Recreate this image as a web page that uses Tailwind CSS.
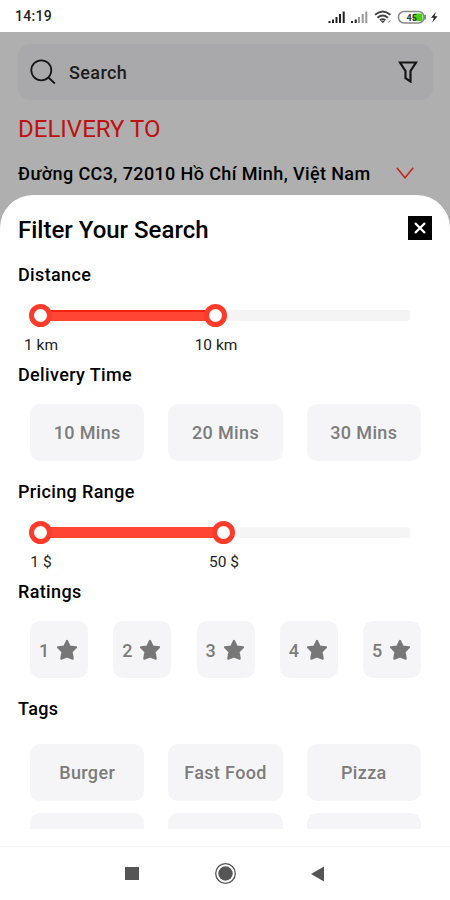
<!DOCTYPE html>
<html lang="vi">
<head>
    <meta charset="UTF-8">
    <meta name="viewport" content="width=device-width, initial-scale=1.0">
    <title>Filter Your Search</title>
    <script src="https://cdn.jsdelivr.net/npm/@tailwindcss/browser@4"></script>
</head>
<body class="bg-white font-['Roboto','Noto_Sans',sans-serif] text-black">
<div class="w-[450px] h-[900px] flex flex-col overflow-hidden">

    <!-- Status bar -->
    <div class="h-8 shrink-0 flex items-center justify-between pt-px pl-[15px] pr-3">
        <span class="text-[14px] font-medium tracking-[0.3px] text-[#222]">14:19</span>
        <svg class="w-[112px] h-4" viewBox="326 8 112 16" fill="none">
            <g fill="#222">
                <path d="M328.5 20h2v2h-2zM332 18.5h2v3.5h-2zM335.5 16h2v6h-2zM339 13h2v9h-2zM342.7 10.5h2v11.5h-2z"/>
                <path d="M351 20h2v2h-2zM354.7 18.5h2v3.5h-2z"/>
            </g>
            <path fill="#999" d="M358 16h2v6h-2zM361.7 13h2v9h-2zM365.3 10.5h2v11.5h-2z"/>
            <g stroke="#444" stroke-width="1.9">
                <path d="M375 13.8q7.7-6.5 15.4 0"/>
                <path d="M377.5 16.7q5.2-4.3 10.4 0"/>
                <path d="M380 19.3q2.7-2.2 5.4 0"/>
            </g>
            <path fill="#444" d="M380.8 20l2 2.3 2-2.3z"/>
            <path stroke="#888" d="M388 21.5l2.5-2"/>
            <rect x="398.500" y="10.500" width="25.500" height="11.500" rx="5.500" stroke="#888" stroke-width="1.500"/>
            <path fill="#888" d="M424 14h2v4.500h-2z"/>
            <rect x="413" y="12.500" width="9.500" height="7.500" rx="1.500" fill="#48d018"/>
            <text x="406.500" y="19.500" font-size="9" font-weight="700" fill="#333">45</text>
            <path fill="#222" d="M436 10.800l-5 6h3l-2 5 5.500-6.500h-3z"/>
        </svg>
    </div>

    <!-- Page behind the sheet -->
    <div class="grow min-h-0 flex flex-col bg-[#afafaf]">
        <div class="px-[18px] pt-3">
            <div class="h-14 -mr-px flex items-center rounded-xl bg-[#a9a9ab] pl-3 pr-[15px]">
                <svg class="w-[26px] h-[26px]" viewBox="0 0 26 26" fill="none" stroke="#161616" stroke-width="1.8">
                    <circle cx="11.3" cy="11.3" r="10"/>
                    <path d="M18.500 18.500l6.300 6"/>
                </svg>
                <span class="ml-[13px] mt-px grow text-[18px] font-medium tracking-[0.4px] text-[#1c1c1c]">Search</span>
                <svg class="w-5 h-[22px]" viewBox="0 0 20 22" fill="none" stroke="#161616" stroke-width="2.2">
                    <path d="M2 1.500h16l-5.500 8.500v10.500l-5-3.300v-7.200z"/>
                </svg>
            </div>
            <div class="mt-[15px] text-[24px] leading-7 text-[#c01010]">DELIVERY TO</div>
            <div class="mt-4 h-7 flex items-center">
                <span class="w-[378px] whitespace-nowrap text-[18px] font-medium tracking-[0.39px]">Đường CC3, 72010 Hồ Chí Minh, Việt Nam</span>
                <svg class="w-[18px] h-3" viewBox="0 0 18 12" fill="none" stroke="#c8201a" stroke-width="1.5">
                    <path d="M.8.8l8.200 10 8.200-10"/>
                </svg>
            </div>
        </div>

        <!-- Filter sheet -->
        <div class="mt-2 grow min-h-0 overflow-hidden rounded-t-[33px] bg-white px-[18px] pt-5">
            <div class="h-7 flex items-center justify-between">
                <h1 class="pt-px text-[24px] leading-7 font-medium">Filter Your Search</h1>
                <div class="w-6 h-6 -mt-0.5 bg-black flex items-center justify-center">
                    <svg class="w-3 h-3" viewBox="0 0 12 12" stroke="#fff" stroke-width="2.3"><path d="M1 1l10 10M11 1L1 11"/></svg>
                </div>
            </div>

            <h2 class="mt-5 text-[18px] leading-6 font-medium tracking-[0.36px]">Distance</h2>
            <div class="relative mt-[17px] ml-[11px] h-[23px] w-[381px] flex items-center">
                <div class="ml-3 h-[11px] w-[175px] border-t-2 border-[#f02214] bg-[#ff4635]"></div>
                <div class="h-[11px] grow rounded-r-sm bg-[#f4f4f4]"></div>
                <div class="absolute left-0 w-[23px] h-[23px] rounded-full border-[5.5px] border-[#fc3b2b] bg-white"></div>
                <div class="absolute left-[175px] w-[23px] h-[23px] rounded-full border-[5.5px] border-[#fc3b2b] bg-white"></div>
            </div>
            <div class="mt-[9px] flex text-[15.5px] leading-[18px] text-[#222]">
                <span class="w-[46px] text-center">1 km</span>
                <span class="ml-[124px] w-[56px] text-center">10 km</span>
            </div>

            <h2 class="mt-[9px] text-[18px] leading-6 font-medium tracking-[0.36px]">Delivery Time</h2>
            <div class="mt-[17px] ml-3 w-[391px] grid grid-cols-3 gap-6 text-center text-[18px] leading-[58px] font-medium tracking-[0.36px] text-[#7c7c7c]">
                <div class="h-[57px] rounded-[10px] bg-[#f5f5f7]">10 Mins</div>
                <div class="h-[57px] rounded-[10px] bg-[#f5f5f7]">20 Mins</div>
                <div class="h-[57px] rounded-[10px] bg-[#f5f5f7]">30 Mins</div>
            </div>

            <h2 class="mt-[19px] text-[18px] leading-6 font-medium tracking-[0.36px]">Pricing Range</h2>
            <div class="relative mt-[17px] ml-[11px] h-[23px] w-[381px] flex items-center">
                <div class="ml-3 h-[11px] w-[183px] bg-[#ff4635]"></div>
                <div class="h-[11px] grow rounded-r-sm bg-[#f5f5f6]"></div>
                <div class="absolute left-0 w-[23px] h-[23px] rounded-full border-[5.5px] border-[#fc3b2b] bg-white"></div>
                <div class="absolute left-[183px] w-[23px] h-[23px] rounded-full border-[5.5px] border-[#fc3b2b] bg-white"></div>
            </div>
            <div class="mt-[9px] flex text-[15.5px] leading-[18px] text-[#222]">
                <span class="w-[46px] text-center">1 $</span>
                <span class="ml-[132px] w-[56px] text-center">50 $</span>
            </div>

            <h2 class="mt-[9px] text-[18px] leading-6 font-medium tracking-[0.36px]">Ratings</h2>
            <svg class="hidden">
                <symbol id="star" viewBox="0 0 22 22">
                    <path d="M11 1.800l2.700 5.600 6.400.9-4.500 4.400 1.200 7-5.800-2.100-5.800 2.100 1.200-7L1.900 8.300l6.400-.9z" fill="#777" stroke="#777" stroke-width="2" stroke-linejoin="round"/>
                </symbol>
            </svg>
            <div class="mt-[17px] ml-3 w-[391px] flex justify-between text-[18px] font-medium text-[#7c7c7c]">
                <div class="w-[58px] h-[57px] flex items-center justify-center gap-[7px] pr-px pt-px rounded-[10px] bg-[#f5f5f7]">1<svg class="w-[22px] h-[22px]"><use href="#star"/></svg></div>
                <div class="w-[58px] h-[57px] flex items-center justify-center gap-[7px] pr-px pt-px rounded-[10px] bg-[#f5f5f7]">2<svg class="w-[22px] h-[22px]"><use href="#star"/></svg></div>
                <div class="w-[58px] h-[57px] flex items-center justify-center gap-[7px] pr-px pt-px rounded-[10px] bg-[#f5f5f7]">3<svg class="w-[22px] h-[22px]"><use href="#star"/></svg></div>
                <div class="w-[58px] h-[57px] flex items-center justify-center gap-[7px] pr-px pt-px rounded-[10px] bg-[#f5f5f7]">4<svg class="w-[22px] h-[22px]"><use href="#star"/></svg></div>
                <div class="w-[58px] h-[57px] flex items-center justify-center gap-[7px] pr-px pt-px rounded-[10px] bg-[#f5f5f7]">5<svg class="w-[22px] h-[22px]"><use href="#star"/></svg></div>
            </div>

            <h2 class="mt-[19px] text-[18px] leading-6 font-medium tracking-[0.36px]">Tags</h2>
            <div class="mt-[23px] ml-3 w-[391px] h-[85px] overflow-hidden grid grid-cols-3 content-start gap-x-6 gap-y-3 text-center text-[18px] leading-[58px] font-medium tracking-[0.36px] text-[#7c7c7c]">
                <div class="h-[57px] rounded-[10px] bg-[#f5f5f7]">Burger</div>
                <div class="h-[57px] rounded-[10px] bg-[#f5f5f7]">Fast Food</div>
                <div class="h-[57px] rounded-[10px] bg-[#f5f5f7]">Pizza</div>
                <!-- next row, cut off by the scroll area -->
                <div class="h-[57px] rounded-[10px] bg-[#f5f5f7]"></div>
                <div class="h-[57px] rounded-[10px] bg-[#f5f5f7]"></div>
                <div class="h-[57px] rounded-[10px] bg-[#f5f5f7]"></div>
            </div>
        </div>
    </div>

    <!-- Android navigation bar -->
    <div class="h-[54px] shrink-0 flex items-center border-t border-[#f2f2f2] bg-white">
        <div class="ml-[125px] w-[14px] h-[13px] bg-[#555]"></div>
        <svg class="ml-[75px] w-[23px] h-[23px]" viewBox="0 0 23 23">
            <circle cx="11.5" cy="11.5" r="9.8" fill="none" stroke="#555" stroke-width="1.3"/>
            <circle cx="11.5" cy="11.5" r="7.2" fill="#555"/>
        </svg>
        <svg class="ml-[74px] w-[13px] h-4" viewBox="0 0 13 16" fill="#555"><path d="M0 8L13 .5v15z"/></svg>
    </div>
</div>
</body>
</html>
